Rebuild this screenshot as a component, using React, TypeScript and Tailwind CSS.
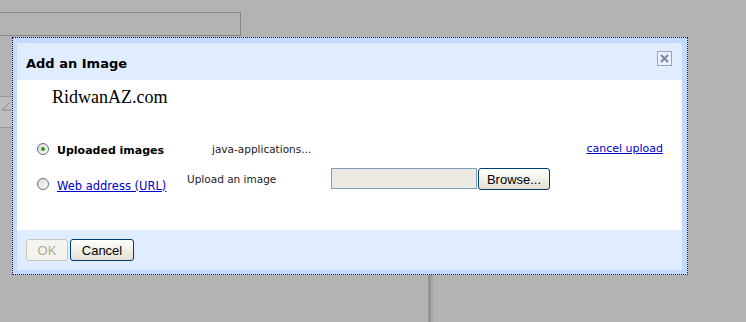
import React from 'react'

function Radio({ checked }: { checked?: boolean }) {
  return (
    <span className="flex h-[12px] w-[12px] shrink-0 items-center justify-center rounded-full border border-[#5d7189] bg-linear-to-br from-[#d9d8d0] to-white">
      {checked && <span className="h-[4px] w-[4px] rounded-full bg-[#2b9f2b]" />}
    </span>
  )
}

function XpButton({ children, disabled, className = '' }: { children: React.ReactNode; disabled?: boolean; className?: string }) {
  return (
    <button
      disabled={disabled}
      className={
        "h-[22px] rounded-[3px] border font-['Liberation_Sans',sans-serif] text-[13px] leading-none " +
        (disabled
          ? 'border-[#cac8bb] bg-[#f4f3ee] text-[#aca899] '
          : 'border-[#003c74] bg-linear-to-b from-white to-[#e3e0d2] text-black ') +
        className
      }
    >
      {children}
    </button>
  )
}

export default function App() {
  return (
    <div className="relative h-[322px] w-[746px] overflow-hidden bg-[#b3b3b3] font-['DejaVu_Sans',sans-serif] text-black">
      {/* page behind the overlay */}
      <div className="absolute left-[-2px] top-[12px] h-[24px] w-[243px] border border-[#888888]" />
      <div className="absolute left-[-2px] top-[96px] h-[32px] w-[15px] border border-[#9a9a9a] bg-[#bdbdbd]">
        <svg width="14" height="14" viewBox="0 0 14 14" className="mt-[2px]">
          <path d="M3 11L10 4M3 11H12" stroke="#8a8a8a" strokeWidth="1" fill="none" />
        </svg>
      </div>
      <div className="absolute left-[428px] top-[250px] h-[80px] w-[5px] border-l-[3px] border-[#939393] bg-[#a6a6a6]" />

      {/* dialog */}
      <div className="absolute left-[12px] top-[37px] w-[676px] border border-dotted border-[#1e1e1e] bg-[#c3d9ff] pb-[4px] pl-[4px] pr-[5px] pt-[5px]">
        <div className="flex h-[37px] items-start justify-between bg-[#e0ecff]">
          <h2 className="pl-[9px] pt-[13px] text-[13px] font-bold leading-[16px]">Add an Image</h2>
          <div className="mr-[10px] mt-[8px] flex h-[15px] w-[15px] items-center justify-center border border-[#97a6be] bg-[#e9f0fc]">
            <svg width="9" height="9" viewBox="0 0 9 9">
              <path d="M1 1L8 8M8 1L1 8" stroke="#7b8698" strokeWidth="2" />
            </svg>
          </div>
        </div>

        <div className="h-[150px] bg-white pt-[7px]">
          <div className="pl-[35px] font-['Liberation_Serif',serif] text-[18px] leading-[20px]">RidwanAZ.com</div>

          <div className="mt-[32px] flex h-[20px] items-center pr-[19px]">
            <label className="flex w-[195px] items-center pl-[20px]">
              <Radio checked />
              <span className="ml-[8px] mt-[4px] text-[11px] font-bold leading-[14px]">Uploaded images</span>
            </label>
            <span className="text-[10.5px] leading-[13px] text-[#222]">java-applications...</span>
            <a className="ml-auto text-[11px] leading-[14px] text-[#0000cc] underline">cancel upload</a>
          </div>

          <div className="flex items-start">
            <label className="mt-[18px] flex h-[14px] w-[170px] items-center pl-[20px]">
              <Radio />
              <a className="ml-[8px] mt-[4px] text-[11.5px] leading-[14px] text-[#0000cc] underline">Web address (URL)</a>
            </label>
            <span className="mt-[14px] w-[144px] text-[10.5px] leading-[13px] text-[#222]">Upload an image</span>
            <input type="text" disabled className="mt-[9px] h-[21px] w-[146px] border border-[#7f9db9] bg-[#ebe9e1]" />
            <XpButton className="ml-[1px] mt-[9px] w-[72px] text-[12.5px]">Browse...</XpButton>
          </div>
        </div>

        <div className="flex h-[40px] items-start gap-[2px] bg-[#e0ecff] pl-[9px] pt-[9px]">
          <XpButton disabled className="w-[42px]">OK</XpButton>
          <XpButton className="w-[64px]">Cancel</XpButton>
        </div>
      </div>
    </div>
  )
}
